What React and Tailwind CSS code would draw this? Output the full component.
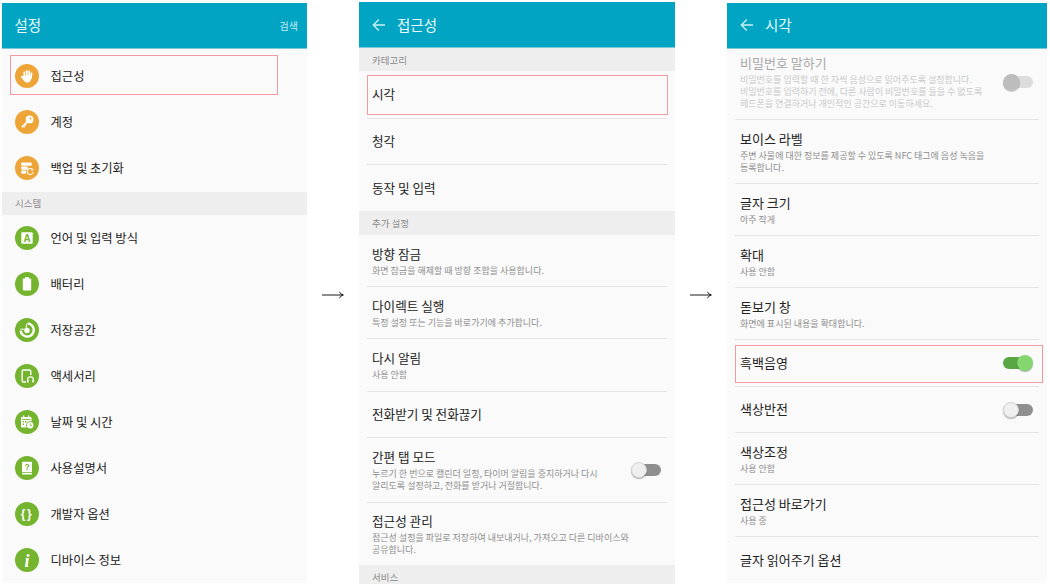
const KR = "font-['Noto_Sans_CJK_KR','Noto_Sans',sans-serif]";

function Circle({ color, children }) {
  return (
    <svg viewBox="0 0 24 24" className="w-6 h-6 shrink-0">
      <circle cx="12" cy="12" r="12" fill={color} />
      {children}
    </svg>
  );
}
const OR = "#eda537";
const GR = "#74b42e";

const icons = {
  hand: (
    <Circle color={OR}>
      <g stroke="#fff" strokeWidth="1.8" strokeLinecap="round" fill="none">
        <path d="M9.3 8.3V13M11.8 6.8V13M14.3 7.5V13M16.5 9.3L16 14M6.8 12.6L9 15.5" />
      </g>
      <path d="M8.5 11.5H16.3L16 15.5C15.6 17.6 14 18.6 12.3 18.6C10.6 18.6 9.6 17.8 8.8 16.2Z" fill="#fff" />
    </Circle>
  ),
  key: (
    <Circle color={OR}>
      <circle cx="14.6" cy="9.4" r="3.9" fill="#fff" />
      <circle cx="15.4" cy="8.6" r="1" fill={OR} />
      <path d="M12.4 11.6L6.8 17.2M8.2 15.8L9.6 17.2M9.8 14.2L11 15.4" stroke="#fff" strokeWidth="1.6" fill="none" />
    </Circle>
  ),
  backup: (
    <Circle color={OR}>
      <rect x="6.2" y="6.5" width="10.5" height="3.2" rx="1" fill="#fff" />
      <rect x="6.2" y="10.5" width="6.5" height="3.2" rx="1" fill="#fff" />
      <rect x="6.2" y="14.5" width="5" height="3.2" rx="1" fill="#fff" />
      <path d="M17.6 13.6A3 3 0 1 0 18.2 16" stroke="#fff" strokeWidth="1.1" fill="none" />
      <path d="M18.2 12.2V14.4H16" fill="#fff" />
    </Circle>
  ),
  lang: (
    <Circle color={GR}>
      <rect x="6.3" y="6.3" width="11.4" height="11.4" rx="1" fill="#fff" />
      <text x="12" y="16" textAnchor="middle" fontSize="10" fontWeight="700" fill={GR} fontFamily="Liberation Sans">A</text>
    </Circle>
  ),
  battery: (
    <Circle color={GR}>
      <rect x="10" y="5.2" width="4" height="2" fill="#fff" />
      <rect x="7.8" y="6.6" width="8.4" height="12" rx="1" fill="#fff" />
    </Circle>
  ),
  storage: (
    <Circle color={GR}>
      <path d="M12.6 5.4A6.6 6.6 0 1 1 5.6 12.6" stroke="#fff" strokeWidth="2.4" fill="none" />
      <circle cx="12" cy="12.4" r="2.7" fill="#fff" />
      <path d="M5.4 11.1L11 11.4L11.6 5.8" stroke="#fff" strokeWidth="1" fill="none" />
    </Circle>
  ),
  acc: (
    <Circle color={GR}>
      <path d="M11 18H8.5C7.7 18 7.2 17.5 7.2 16.8V7.2C7.2 6.5 7.7 6 8.5 6H14.5C15.3 6 15.8 6.5 15.8 7.2V11" stroke="#fff" strokeWidth="1.4" fill="none" />
      <path d="M12.6 17.5V15.8A2.9 2.9 0 0 1 18.4 15.8V17.5" stroke="#fff" strokeWidth="1.2" fill="none" />
      <rect x="12" y="15.8" width="1.6" height="2.6" rx="0.5" fill="#fff" />
      <rect x="17.4" y="15.8" width="1.6" height="2.6" rx="0.5" fill="#fff" />
    </Circle>
  ),
  date: (
    <Circle color={GR}>
      <rect x="6" y="7" width="10.5" height="10.5" rx="1" fill="#fff" />
      <rect x="8" y="5.5" width="1.3" height="3" fill="#fff" />
      <rect x="13" y="5.5" width="1.3" height="3" fill="#fff" />
      <rect x="7" y="9.2" width="8.5" height="0.8" fill={GR} />
      <rect x="7.6" y="11" width="1.4" height="1.4" fill={GR} />
      <rect x="10" y="11" width="1.4" height="1.4" fill={GR} />
      <rect x="7.6" y="13.6" width="1.4" height="1.4" fill={GR} />
      <circle cx="15.2" cy="15.2" r="4" fill={GR} />
      <circle cx="15.2" cy="15.2" r="3.2" fill="#fff" />
      <path d="M15.2 13.4V15.4H17" stroke={GR} strokeWidth="0.8" fill="none" />
    </Circle>
  ),
  manual: (
    <Circle color={GR}>
      <rect x="7" y="5.8" width="10" height="10.4" rx="0.8" fill="#fff" />
      <rect x="7" y="17" width="10" height="1.4" rx="0.5" fill="#fff" />
      <text x="12" y="14" textAnchor="middle" fontSize="8.5" fontWeight="700" fill={GR} fontFamily="Liberation Sans">?</text>
    </Circle>
  ),
  dev: (
    <Circle color={GR}>
      <text x="12" y="16" textAnchor="middle" fontSize="12" fontWeight="700" fill="#fff" fontFamily="Liberation Sans" letterSpacing="1.5">{"{}"}</text>
    </Circle>
  ),
  info: (
    <Circle color={GR}>
      <text x="12" y="18.5" textAnchor="middle" fontSize="18" fontWeight="700" fontStyle="italic" fill="#fff" fontFamily="Liberation Serif">i</text>
    </Circle>
  ),
};

function BackArrow() {
  return (
    <svg viewBox="0 0 14 14" className="w-[14px] h-[14px] shrink-0" fill="none" stroke="#c9f3f7" strokeWidth="1.3">
      <path d="M13 7H1.5M6.8 1.5L1.3 7L6.8 12.5" />
    </svg>
  );
}

function Header({ title, back, gap = "", lift = "", extra }) {
  return (
    <div className={`h-[46px] shrink-0 bg-[#01a5c3] border-b border-[#7cc8d8] flex items-center pl-[13px] pr-[9px] ${lift}`}>
      {back && <BackArrow />}
      <span className={`text-[14.5px] text-[#e8f8fb] ${gap}`}>{title}</span>
      {extra && <span className="ml-auto text-[10px] text-[#c4ecf3]">{extra}</span>}
    </div>
  );
}

function Section({ label, h }) {
  return (
    <div className={`${h} shrink-0 bg-[#eeeeee] flex items-center pl-[13px] text-[9.5px] text-[#8b8b8b]`}>{label}</div>
  );
}

function MainRow({ icon, label, red }) {
  return (
    <div className="h-[46px] shrink-0 relative flex items-center pl-[13px] gap-[11.5px]">
      {icons[icon]}
      <span className="text-[12.3px] text-[#222222]">{label}</span>
      {red && <div className="absolute left-[8px] top-[2px] w-[268px] h-[40px] border border-[#f19ba0]" />}
    </div>
  );
}

function Toggle({ state }) {
  if (state === "on")
    return (
      <div className="relative w-[30px] h-[16px] shrink-0">
        <div className="absolute left-0 top-[2px] w-[26px] h-[12px] rounded-full bg-[#58a644]" />
        <div className="absolute right-0 top-0 w-[16px] h-[16px] rounded-full bg-[#84d76f] shadow-[0_1px_1px_rgba(0,0,0,0.3)]" />
      </div>
    );
  if (state === "dis")
    return (
      <div className="relative w-[30px] h-[16px] shrink-0">
        <div className="absolute right-0 top-[2px] w-[26px] h-[12px] rounded-full bg-[#dcdcdc]" />
        <div className="absolute left-0 top-0 w-[17px] h-[17px] rounded-full bg-[#bdbdbd] shadow-[0_1px_1px_rgba(0,0,0,0.2)]" />
      </div>
    );
  return (
    <div className="relative w-[30px] h-[16px] shrink-0">
      <div className="absolute right-0 top-[2px] w-[26px] h-[12px] rounded-full bg-[#8f8f8f]" />
      <div className="absolute left-0 top-0 w-[16px] h-[16px] rounded-full bg-[#efefef] border border-[#d5d5d5] shadow-[0_1px_1px_rgba(0,0,0,0.3)]" />
    </div>
  );
}

function Row({ h, title, sub, toggle, divider = true, disabled, red, size = "text-[12.6px]" }) {
  return (
    <div className={`${h} shrink-0 relative flex items-center pl-[5px] pr-[6px] ${divider ? "border-b border-[#e4e4e4]" : ""}`}>
      <div className={`flex-1 min-w-0 flex flex-col justify-center ${sub ? "" : "pb-[2px]"}`}>
        <div className={`${size} leading-[17px] ${disabled ? "text-[#a8a8a8]" : "text-[#222222]"}`}>{title}</div>
        {sub && (
          <div className={`mt-[3px] whitespace-pre-line text-[9px] leading-[12px] ${disabled ? "text-[#c9c9c9]" : "text-[#8e8e8e]"}`}>
            {sub}
          </div>
        )}
      </div>
      {toggle && <Toggle state={toggle} />}
      {red}
    </div>
  );
}

function Arrow() {
  return (
    <div className="w-[52px] shrink-0 h-[584px] flex items-center justify-center pt-[6px]">
      <svg viewBox="0 0 22 8" className="w-[22px] h-[8px]" fill="none" stroke="#1a1a1a" strokeWidth="1">
        <path d="M0 4H21M17.5 0.8C18.2 2.4 19.4 3.5 21.4 4C19.4 4.5 18.2 5.6 17.5 7.2" />
      </svg>
    </div>
  );
}

const S3 = "text-[13px]";

export default function App() {
  return (
    <div className={`${KR} w-[1050px] h-[584px] bg-white flex overflow-hidden pl-[2px]`}>
      {/* Panel 1 */}
      <div className="w-[305px] shrink-0 mt-[3px] h-[580px] bg-[#fafafa] flex flex-col overflow-hidden">
        <Header title="설정" extra="검색" gap="-ml-[0.5px]" lift="pb-[1px]" />
        <div className="h-[4px] shrink-0" />
        <MainRow icon="hand" label="접근성" red />
        <MainRow icon="key" label="계정" />
        <MainRow icon="backup" label="백업 및 초기화" />
        <div className="h-[1px] shrink-0" />
        <Section label="시스템" h="h-[23px]" />
        <MainRow icon="lang" label="언어 및 입력 방식" />
        <MainRow icon="battery" label="배터리" />
        <MainRow icon="storage" label="저장공간" />
        <MainRow icon="acc" label="액세서리" />
        <MainRow icon="date" label="날짜 및 시간" />
        <MainRow icon="manual" label="사용설명서" />
        <MainRow icon="dev" label="개발자 옵션" />
        <MainRow icon="info" label="디바이스 정보" />
      </div>

      <Arrow />

      {/* Panel 2 */}
      <div className="w-[316px] shrink-0 mt-[2px] h-[582px] bg-[#fafafa] flex flex-col overflow-hidden">
        <Header title="접근성" back gap="ml-[11px]" />
        <Section label="카테고리" h="h-[23px] pt-[1px]" />
        <div className="mx-[8px] flex flex-col">
          <Row
            h="h-[48px]"
            title="시각"
            red={<div className="absolute left-0 top-[4px] w-[301px] h-[40px] border border-[#f19ba0]" />}
          />
          <Row h="h-[46px]" title="청각" />
          <Row h="h-[46px]" title="동작 및 입력" divider={false} />
        </div>
        <Section label="추가 설정" h="h-[24px]" />
        <div className="mx-[8px] flex flex-col">
          <Row h="h-[52px]" title="방향 잠금" sub="화면 잠금을 해제할 때 방향 조합을 사용합니다." />
          <Row h="h-[52px]" title="다이렉트 실행" sub="특정 설정 또는 기능을 바로가기에 추가합니다." />
          <Row h="h-[53px]" title="다시 알림" sub="사용 안함" />
          <Row h="h-[46px]" title="전화받기 및 전화끊기" />
          <Row
            h="h-[65px]"
            title="간편 탭 모드"
            sub={"누르기 한 번으로 캘린더 일정, 타이머 알림을 중지하거나 다시\n알리도록 설정하고, 전화를 받거나 거절합니다."}
            toggle="off"
          />
          <Row
            h="h-[62px]"
            title="접근성 관리"
            sub={"접근성 설정을 파일로 저장하여 내보내거나, 가져오고 다른 디바이스와\n공유합니다."}
            divider={false}
          />
        </div>
        <Section label="서비스" h="h-[24px]" />
      </div>

      <Arrow />

      {/* Panel 3 */}
      <div className="w-[320px] shrink-0 mt-[3px] h-[580px] bg-[#fafafa] flex flex-col overflow-hidden">
        <Header title="시각" back gap="ml-[11px]" lift="pb-[1px]" />
        <div className="mx-[8px] flex flex-col">
          <Row
            h="h-[71px] pb-[4px]"
            size={S3}
            title="비밀번호 말하기"
            sub={"비밀번호를 입력할 때 한 자씩 음성으로 읽어주도록 설정합니다.\n비밀번호를 입력하기 전에, 다른 사람이 비밀번호를 들을 수 없도록\n헤드폰을 연결하거나 개인적인 공간으로 이동하세요."}
            toggle="dis"
            disabled
          />
          <Row h="h-[64px]" size={S3} title="보이스 라벨" sub={"주변 사물에 대한 정보를 제공할 수 있도록 NFC 태그에 음성 녹음을\n등록합니다."} />
          <Row h="h-[52px]" size={S3} title="글자 크기" sub="아주 작게" />
          <Row h="h-[52px]" size={S3} title="확대" sub="사용 안함" />
          <Row h="h-[52px]" size={S3} title="돋보기 창" sub="화면에 표시된 내용을 확대합니다." />
          <Row
            h="h-[47px]"
            size={S3}
            title="흑백음영"
            toggle="on"
            red={<div className="absolute left-0 top-[5px] w-[308px] h-[38px] border border-[#f19ba0]" />}
          />
          <Row h="h-[46px]" size={S3} title="색상반전" toggle="off" />
          <Row h="h-[52px]" size={S3} title="색상조정" sub="사용 안함" />
          <Row h="h-[52px]" size={S3} title="접근성 바로가기" sub="사용 중" />
          <Row h="h-[47px]" size={S3} title="글자 읽어주기 옵션" divider={false} />
        </div>
      </div>
    </div>
  );
}
